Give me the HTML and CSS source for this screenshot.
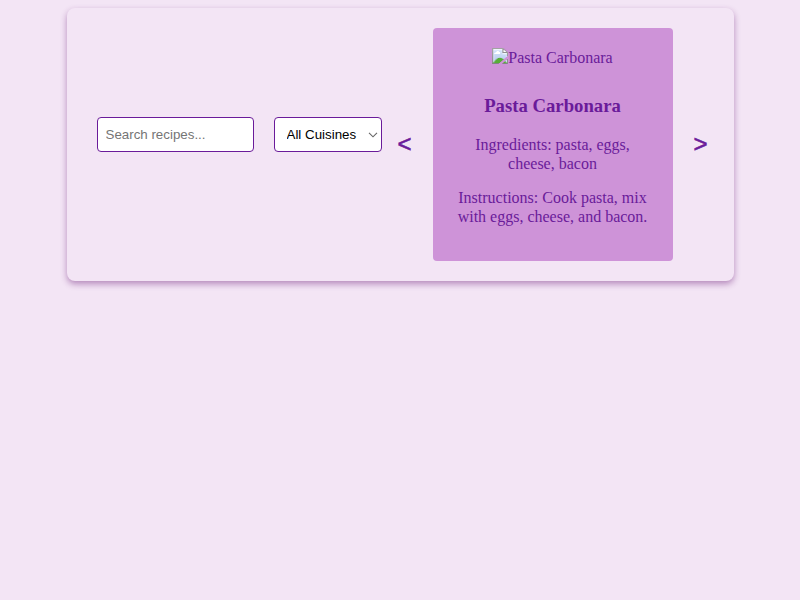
FILE: index.html
```html
<!DOCTYPE html>
<html lang="en">
<head>
<meta charset="utf-8">
<title>Recipes</title>
<link rel="stylesheet" href="styles.css">
</head>
<body>
<div class="container">
  <input class="search" type="text" placeholder="Search recipes...">
  <div class="cuisine-wrap">
    <select class="cuisine"><option>All Cuisines</option><option>Italian</option></select>
    <svg class="chevron" width="10" height="6" viewBox="0 0 10 6"><path d="M1 0.8 L5 4.8 L9 0.8" fill="none" stroke="#666" stroke-width="1.1"/></svg>
  </div>
  <div class="carousel">
    <button class="arrow prev">&lt;</button>
    <div class="card">
      <img class="photo" src="carbonara.jpg" alt="Pasta Carbonara">
      <h3>Pasta Carbonara</h3>
      <p>Ingredients: pasta, eggs, cheese, bacon</p>
      <p>Instructions: Cook pasta, mix with eggs, cheese, and bacon.</p>
    </div>
    <button class="arrow next">&gt;</button>
  </div>
</div>
</body>
</html>
```

FILE: styles.css
```css
body {
  box-sizing: border-box;
  min-height: 600px;
  margin: 0;
  padding: 8px;
  display: flex;
  justify-content: center;
  align-items: flex-start;
  background: #f3e5f5;
  color: #6a1b9a;
  font: 16px/19px "Liberation Serif", serif;
}
.container {
  display: flex;
  align-items: center;
  box-sizing: border-box;
  width: 667px;
  padding: 20px;
  border-radius: 8px;
  background: #f3e5f5;
  box-shadow: 0 3px 6px rgba(106, 27, 120, 0.45);
}
.search,
.cuisine {
  box-sizing: border-box;
  height: 35px;
  padding: 8px;
  border: 1px solid #6a1b9a;
  border-radius: 4px;
  background: #fff;
  font: 13.333px "Liberation Sans", sans-serif;
}
.search { width: 157px; margin: -20px 10px 0; }
.cuisine-wrap { position: relative; height: 35px; margin: -20px 0 0 10px; }
.cuisine {
  width: 108px;
  padding-left: 12px;
  color: #000;
  appearance: none;
}
.chevron { position: absolute; right: 4px; top: 15px; }
.carousel { display: flex; align-items: center; }
.arrow {
  width: 51px;
  padding: 0;
  border: 0;
  background: none;
  color: #6a1b9a;
  font: 24px "Liberation Sans", sans-serif;
  -webkit-text-stroke: 0.6px #6a1b9a;
}
.prev { padding-right: 5px; }
.next { padding-left: 5px; }
.card {
  box-sizing: border-box;
  width: 240px;
  padding: 20px;
  border-radius: 4px;
  background: #ce93d8;
  text-align: center;
}
.photo { margin-bottom: 10px; }
h3 { margin: 18px 0 17.5px; font-size: 18.72px; line-height: 22px; }
p { margin: 15px 0 15px; }
```
